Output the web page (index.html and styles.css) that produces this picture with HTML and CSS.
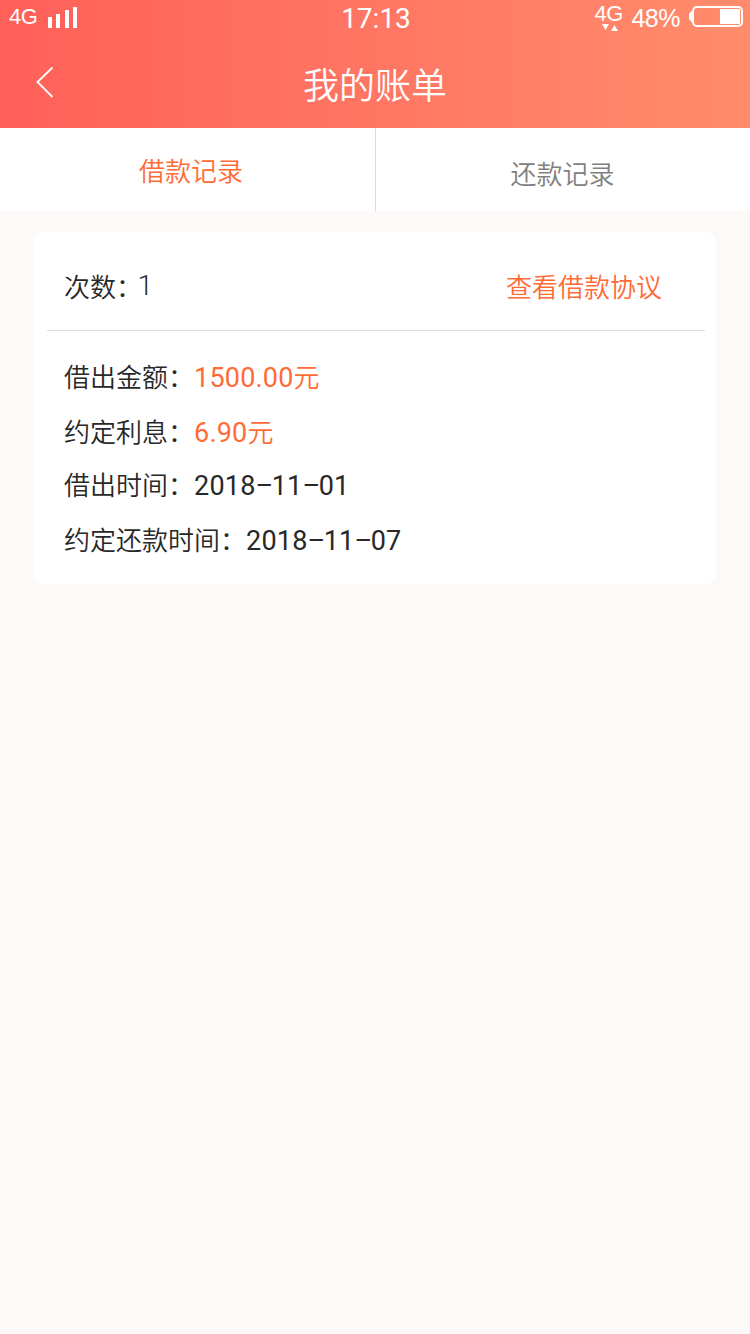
FILE: index.html
```html
<!DOCTYPE html>
<html lang="zh-CN">
<head>
  <meta charset="UTF-8">
  <meta name="viewport" content="width=device-width, initial-scale=1.0">
  <title>我的账单</title>
  <link rel="stylesheet" href="styles.css">
</head>
<body>
  <header class="header">
    <div class="status">
      <div class="status-left">
        <span class="net">4G</span>
        <svg class="signal" width="30" height="21" viewBox="0 0 30 21" fill="#fff">
          <path d="M0 10h4v11H0zM8 7h4v14H8zM17 3h4v18h-4zM25 0h4v21h-4z"/>
        </svg>
      </div>
      <span class="time">17:13</span>
      <div class="status-right">
        <div class="data">
          <span class="net">4G</span>
          <svg class="arrows" width="17" height="7" viewBox="0 0 17 7" fill="#fff">
            <path d="M0 0h7L3.500 6zM9 7h7L12.500 1z"/>
          </svg>
        </div>
        <span class="percent">48%</span>
        <svg class="battery" width="54" height="21" viewBox="0 0 54 21">
          <path d="M4 5H2.500L0 8v5l2.500 3H4z" fill="#fff"/>
          <rect x="4" y="1" width="49" height="19" rx="4" fill="none" stroke="#fff" stroke-width="2"/>
          <path d="M31 3h20v15H31z" fill="#fff"/>
        </svg>
      </div>
    </div>
    <div class="nav">
      <svg class="back" width="18" height="32" viewBox="0 0 18 32" fill="none" stroke="#fff" stroke-width="1.800">
        <path d="M16.500 1.500L1.500 16l15 15"/>
      </svg>
      <h1>我的账单</h1>
      <span></span>
    </div>
  </header>

  <div class="tabs">
    <div class="tab active">借款记录</div>
    <div class="tab">还款记录</div>
  </div>

  <div class="card">
    <div class="card-top">
      <p class="times"><span>次数<span class="colon">：</span></span><span class="count">1</span></p>
      <a class="link">查看借款协议</a>
    </div>
    <div class="card-body">
      <p>借出金额：<span class="num money">1500.00</span><span class="money">元</span></p>
      <p>约定利息：<span class="num money">6.90</span><span class="money">元</span></p>
      <p>借出时间：<span class="num">2018<span class="dash">–</span>11<span class="dash">–</span>01</span></p>
      <p>约定还款时间：<span class="num">2018<span class="dash">–</span>11<span class="dash">–</span>07</span></p>
    </div>
  </div>
</body>
</html>
```
FILE: styles.css
```css
* {
  box-sizing: border-box;
}

body {
  margin: 0;
  min-height: 100vh;
  background: #fdf9f8;
  color: #282828;
  font-family: "Noto Sans CJK SC", sans-serif;
  font-size: 26px;
  font-weight: 350;
}

p, h1 {
  margin: 0;
  font-weight: inherit;
}

svg {
  display: block;
}

/* header */
.header {
  height: 128px;
  background: linear-gradient(to right, #ff6059, #ff8c6c);
  color: #fff;
}

.status {
  display: grid;
  grid-template-columns: 1fr auto 1fr;
  height: 40px;
  padding: 0 7px 0 9px;
  font-family: "Liberation Sans", sans-serif;
}

.status-left {
  display: flex;
  gap: 11px;
  padding-top: 7px;
}

.net {
  font-size: 22px;
  line-height: 20px;
  letter-spacing: -0.5px;
}

.time {
  font-family: Roboto, sans-serif;
  font-size: 28px;
  font-weight: 400;
  line-height: 37px;
}

.status-right {
  display: flex;
  justify-content: flex-end;
  padding-top: 6px;
}

.data {
  width: 28px;
  margin-top: -2px;
}

.data .net {
  display: block;
}

.arrows {
  margin-left: 8px;
}

.percent {
  margin-left: 9px;
  font-size: 25px;
  line-height: 24px;
  letter-spacing: -0.5px;
}

.battery {
  margin-left: 9px;
}

.nav {
  display: grid;
  grid-template-columns: 1fr auto 1fr;
  align-items: center;
  height: 84px;
  padding: 0 36px;
}

.nav h1 {
  font-size: 36px;
  line-height: 86px;
}

.back {
  margin-bottom: 2px;
}

/* tabs */
.tabs {
  display: flex;
  height: 83px;
  background: #fff;
}

.tab {
  width: 374px;
  height: 84px;
  padding-right: 1px;
  text-align: center;
  line-height: 90px;
  color: #808080;
}

.tab.active {
  width: 376px;
  padding: 0 0 0 7px;
  border-right: 1px solid #dcdcdc;
  line-height: 84px;
  color: #ff6b35;
}

/* bill card */
.card {
  margin: 21px 34px 0;
  height: 352px;
  padding: 0 11px 0 13px;
  background: #fff;
  border-radius: 10px;
}

.card-top {
  display: flex;
  justify-content: space-between;
  height: 99px;
  padding: 0 43px 0 17px;
  border-bottom: 1px solid #dcdcdc;
  line-height: 108px;
}

.times {
  display: flex;
}

.colon {
  letter-spacing: -4.5px;
}

.count {
  font-family: Roboto, sans-serif;
  font-size: 28px;
  font-weight: 300;
  line-height: 108px;
}

.link,
.money {
  color: #ff6b35;
}

.card-body {
  padding: 18px 17px;
}

.card-body p {
  height: 55px;
  line-height: 54px;
}

.card-body p:nth-child(2) {
  height: 53px;
}

.num {
  font-family: Roboto, sans-serif;
  font-size: 27px;
  font-weight: 400;
  line-height: 1;
  letter-spacing: 0.2px;
}

.dash {
  letter-spacing: -1.5px;
}
```
